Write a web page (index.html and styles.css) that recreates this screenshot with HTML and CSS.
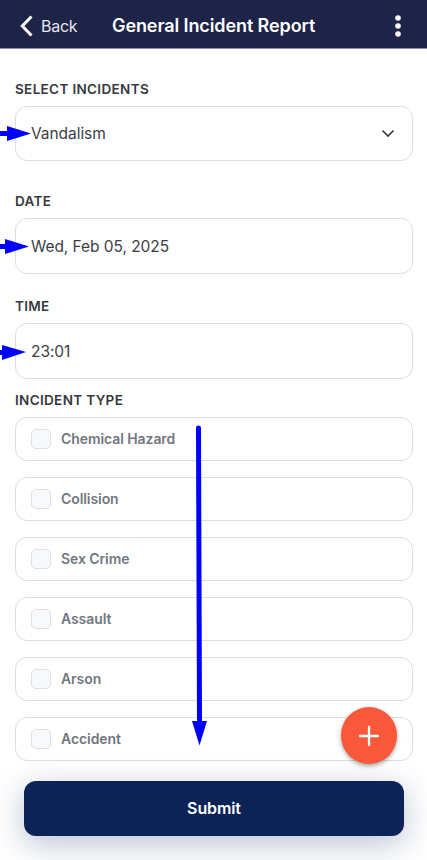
FILE: index.html
```html
<!DOCTYPE html>
<html lang="en">
<head>
<meta charset="utf-8">
<title>General Incident Report</title>
<link rel="stylesheet" href="styles.css">
</head>
<body>
<div class="screen">
  <header class="bar">
    <a class="back"><svg width="14" height="22" viewBox="0 0 14 22"><path d="M11.500 1.500 2.300 11l9.200 9.500" fill="none" stroke="#fff" stroke-width="3"/></svg><span>Back</span></a>
    <h1 class="title">General Incident Report</h1>
    <svg class="more" width="6" height="22" viewBox="0 0 6 22" fill="#fff"><circle cx="3" cy="3" r="2.800"/><circle cx="3" cy="11" r="2.800"/><circle cx="3" cy="19" r="2.800"/></svg>
  </header>
  <main class="form">
    <section class="group group-select">
      <h2 class="label">SELECT INCIDENTS</h2>
      <div class="field"><span>Vandalism</span><svg width="14" height="9" viewBox="0 0 14 9"><path d="M1.500 1.500 7 7l5.500-5.500" fill="none" stroke="#36393d" stroke-width="1.600"/></svg></div>
    </section>
    <section class="group group-date">
      <h2 class="label">DATE</h2>
      <div class="field"><span>Wed, Feb 05, 2025</span></div>
    </section>
    <section class="group group-time">
      <h2 class="label">TIME</h2>
      <div class="field"><span>23:01</span></div>
    </section>
    <section class="group group-type">
      <h2 class="label">INCIDENT TYPE</h2>
      <div class="options">
        <div class="option"><i class="check"></i><span>Chemical Hazard</span></div>
        <div class="option"><i class="check"></i><span>Collision</span></div>
        <div class="option"><i class="check"></i><span>Sex Crime</span></div>
        <div class="option"><i class="check"></i><span>Assault</span></div>
        <div class="option"><i class="check"></i><span>Arson</span></div>
        <div class="option"><i class="check"></i><span>Accident</span></div>
      </div>
    </section>
  </main>
  <div class="submit">Submit</div>
  <div class="fab"><svg width="22" height="22" viewBox="0 0 22 22"><path d="M11 2v18M2 11h18" stroke="#fff" stroke-width="2.300" stroke-linecap="round"/></svg></div>
  <svg class="arrows" width="427" height="860" viewBox="0 0 427 860" fill="#00f">
    <path d="M0 131h7v-5l24 7.500L7 141v-5H0z"/>
    <path d="M0 244h5v-5l24 7.500L5 254v-5H0z"/>
    <path d="M0 350h2v-5l24 7L2 360v-5H0z"/>
    <path d="M196 428a2.500 2.500 0 0 1 5 0L202 721h5l-7.500 24.500L192 721h5z"/>
  </svg>
</div>
</body>
</html>
```
FILE: styles.css
```css
* { box-sizing: border-box; }
body { margin: 0; background: #fff; font-family: Inter, "Liberation Sans", sans-serif; }
.screen { position: relative; width: 427px; height: 860px; overflow: hidden; }
svg { display: block; flex: none; }
.bar { height: 49px; padding: 4px 26px 0 20px; display: flex; align-items: center; background: #1e2348; border-bottom: 1px solid #8e90a5; color: #fff; }
.back { display: flex; align-items: center; gap: 7px; width: 92px; font-size: 16px; letter-spacing: -.25px; line-height: 24px; color: #e5e6ec; }
.title { margin: 0; flex: 1; font-size: 18px; line-height: 24px; font-weight: 600; letter-spacing: -.1px; white-space: nowrap; }
.form { padding: 32px 14.500px 0 15px; }
.label { margin: 0; height: 17px; font-size: 13.500px; line-height: 17px; font-weight: 600; letter-spacing: .34px; color: #36393d; }
.field { height: 55px; margin-top: 8px; padding: 0 17px 0 15px; border: 1px solid #dcdddf; border-radius: 12px; display: flex; align-items: center; justify-content: space-between; font-size: 15.500px; letter-spacing: -.05px; color: #3c3e43; }
.group-date { margin-top: 32px; }
.group-date .field, .group-time .field { height: 56px; }
.group-time { margin-top: 24px; }
.group-type { margin-top: 12px; }
.group-type .label { line-height: 19px; }
.options { margin-top: 8.500px; display: flex; flex-direction: column; gap: 16.200px; }
.option { height: 44px; padding-left: 15px; border: 1px solid #dcdddf; border-radius: 12px; display: flex; align-items: center; gap: 10px; font-size: 14px; font-weight: 600; letter-spacing: -.08px; color: #71777e; }
.option span { margin-bottom: 1px; }
.check { width: 20px; height: 20px; border: 1px solid #dddfe2; border-radius: 5px; background: #f7f9fb; }
.submit { position: absolute; left: 24px; top: 781px; width: 380px; height: 55px; padding-bottom: 2px; border-radius: 12px; background: #0c2358; color: #fff; display: flex; align-items: center; justify-content: center; font-size: 16px; letter-spacing: -.1px; font-weight: 600; box-shadow: 0 8px 32px rgba(12,35,88,.28); }
.fab { position: absolute; left: 341px; top: 707px; width: 56px; height: 57px; border-radius: 50%; background: #f9593a; display: flex; align-items: center; justify-content: center; box-shadow: 0 2px 4px rgba(0,0,0,.35); }
.arrows { position: absolute; left: 0; top: 0; }
```
